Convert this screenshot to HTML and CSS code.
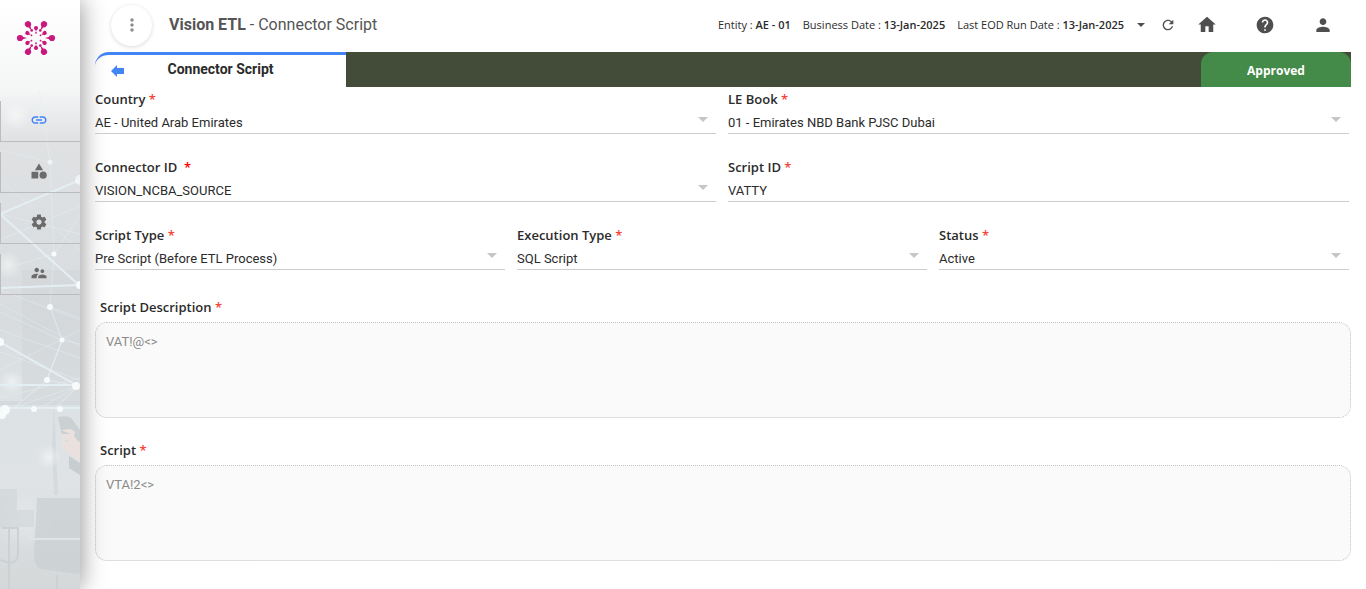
FILE: index.html
```html
<!DOCTYPE html>
<html lang="en">
<head>
<meta charset="utf-8">
<title>Vision ETL - Connector Script</title>
<link rel="stylesheet" href="styles.css">
</head>
<body>
<div class="app">
  <aside class="sidebar">
    <svg class="backdrop" viewBox="0 0 80 589" preserveAspectRatio="xMidYMid slice" aria-hidden="true">
      <defs>
        <linearGradient id="wall" x1="0" y1="0" x2="0" y2="1">
          <stop offset="0" stop-color="#fff"/><stop offset=".15" stop-color="#f5f6f6"/>
          <stop offset=".24" stop-color="#dfe1e3"/><stop offset=".55" stop-color="#d8dcde"/>
          <stop offset=".65" stop-color="#dce1e4"/><stop offset=".82" stop-color="#dfe3e5"/><stop offset="1" stop-color="#d5d8d9"/>
        </linearGradient>
        <radialGradient id="glow"><stop offset="0" stop-color="#fff" stop-opacity=".5"/><stop offset="1" stop-color="#fff" stop-opacity="0"/></radialGradient>
      </defs>
      <rect width="80" height="589" fill="url(#wall)"/>
      <path d="M22 270h58v131H22z" fill="#cdd2d5" opacity=".35"/>
      <path d="M0 401h80v4H0z" fill="#cbd2d5" opacity=".5"/>
      <path d="M54 405l4 90h-4l-2-50z" fill="#c7ced1" opacity=".4"/>
      <circle cx="8" cy="265" r="14" fill="url(#glow)"/><circle cx="12" cy="382" r="12" fill="url(#glow)"/>
      <circle cx="49" cy="457" r="12" fill="url(#glow)"/><circle cx="16" cy="116" r="14" fill="url(#glow)"/>
      <circle cx="25" cy="520" r="30" fill="url(#glow)" opacity=".5"/>
      <g fill="none" stroke="#e4eff4">
        <path stroke-width="2" d="M0 214L80 180M0 214L80 286M0 288l80-3M0 342l78 44M0 385h78M0 408h80"/>
        <path stroke-opacity=".8" d="M50 307l12 33-15 40-33 28M62 340l-15 40 31 6-24 23"/>
        <path stroke-opacity=".5" d="M39 90l11 72 4 92-4 53M40 106L0 137M50 162L0 150M54 254L80 215M54 254L0 270M0 214l80 20M50 307L80 318M0 290l80 30M0 304l80 42M62 340L0 312M62 340l18 4M0 330l80 28M0 370l80-40M78 386L40 408M0 398l80-20M0 352l80 28M0 412l78-26M0 240l80-34M0 180l80 70"/>
      </g>
      <g fill="#f8fbfc">
        <circle cx="50" cy="162" r="2.5" opacity=".7"/><circle cx="80" cy="180" r="5" opacity=".7"/><circle cx="54" cy="254" r="2.5"/><circle cx="80" cy="285" r="4"/>
        <circle cx="50" cy="307" r="3"/><circle cx="62" cy="340" r="2.5"/><circle cx="0" cy="342" r="4"/><circle cx="47" cy="380" r="3"/>
        <circle cx="76" cy="386" r="4"/><circle cx="5" cy="410" r="5"/><circle cx="2" cy="415" r="4"/><circle cx="34" cy="409" r="3"/><circle cx="60" cy="409" r="3"/>
      </g>
      <path d="M58 417q10-2 13 1l9 12v20l-8-2-10-12z" fill="#cbd0d2"/>
      <path d="M61 430l10-1 4 3-1 4 4 5 2 1v18l-10-5-9-8 1-5 7-1-8-2 0-5 9 0z" fill="#eae1de"/>
      <path d="M69 456l11 7v12l-11-7z" fill="#c8cdd0"/>
      <path d="M0 489h17v21H0zM0 510h34v17H0z" fill="#cbd1d4" opacity=".5"/>
      <path d="M37 498h43v76l-40-5q-6-3-6-14z" fill="#c9ced1" opacity=".7"/>
      <path d="M2 528h16v26q0 8-8 9l-10-3M9 528v61M57 575v14" stroke="#ccd1d4" stroke-width="2" fill="none"/>
      <path d="M27 533l5 6h48" stroke="#e0e4e6" stroke-width="2" fill="none"/>
    </svg>
    <a class="logo" href="#" aria-label="Home page">
      <svg width="40" height="40" viewBox="-20 -20 40 40">
        <defs>
          <g id="ray"><circle cx="16" r="3.1"/><path d="M9 0l7-2v4z"/></g>
          <g id="bead"><circle cx="10" r="2.1"/><path d="M6 0l4-1.3v2.6z"/><circle cx="5.2" r=".9"/></g>
        </defs>
        <g fill="#c9187e">
          <use href="#ray"/><use href="#ray" transform="rotate(60)"/><use href="#ray" transform="rotate(120)"/><use href="#ray" transform="rotate(180)"/><use href="#ray" transform="rotate(240)"/><use href="#ray" transform="rotate(300)"/>
          <use href="#bead" transform="rotate(30)"/><use href="#bead" transform="rotate(90)"/><use href="#bead" transform="rotate(150)"/><use href="#bead" transform="rotate(210)"/><use href="#bead" transform="rotate(270)"/><use href="#bead" transform="rotate(330)"/>
          <circle cx="4.3" cy="7.6" r="1.3"/><circle cx="-4.3" cy="7.6" r="1.3"/><circle cx="4.3" cy="-7.6" r="1.3"/><circle cx="-4.3" cy="-7.6" r="1.3"/>
        </g>
      </svg>
    </a>
    <nav class="menu">
      <a class="menu-item active" href="#" aria-label="Connectors"><svg class="menu-icon" viewBox="0 0 24 24"><path d="M3.9 12c0-1.71 1.39-3.1 3.1-3.1h4V7H7c-2.76 0-5 2.24-5 5s2.24 5 5 5h4v-1.9H7c-1.71 0-3.1-1.39-3.1-3.1zM8 13h8v-2H8v2zm9-6h-4v1.9h4c1.71 0 3.1 1.39 3.1 3.1s-1.39 3.1-3.1 3.1h-4V17h4c2.76 0 5-2.24 5-5s-2.24-5-5-5z"/></svg></a>
      <a class="menu-item" href="#" aria-label="Categories"><svg class="menu-icon" viewBox="0 0 24 24"><path d="M12 2l-5.5 9h11zM2 13h9v9H2z"/><circle cx="17.500" cy="17.500" r="4.800"/></svg></a>
      <a class="menu-item" href="#" aria-label="Settings"><svg class="menu-icon" viewBox="0 0 24 24"><path d="M19.430 12.980c.04-.32.07-.64.07-.98s-.03-.66-.07-.98l2.110-1.650c.19-.15.24-.42.12-.64l-2-3.460c-.12-.22-.39-.3-.61-.22l-2.490 1c-.52-.4-1.080-.73-1.690-.98l-.38-2.650C14.460 2.180 14.250 2 14 2h-4c-.25 0-.46.18-.49.42l-.38 2.650c-.61.25-1.170.59-1.690.98l-2.490-1c-.23-.09-.49 0-.61.22l-2 3.460c-.13.22-.07.49.12.64l2.110 1.650c-.04.32-.07.65-.07.98s.03.66.07.98l-2.110 1.650c-.19.15-.24.42-.12.64l2 3.460c.12.22.39.3.61.22l2.490-1c.52.4 1.080.73 1.690.98l.38 2.650c.03.24.24.42.49.42h4c.25 0 .46-.18.49-.42l.38-2.650c.61-.25 1.170-.59 1.690-.98l2.490 1c.23.09.49 0 .61-.22l2-3.460c.12-.22.07-.49-.12-.64l-2.110-1.650zM12 15.500c-1.930 0-3.500-1.570-3.500-3.500s1.570-3.500 3.500-3.500 3.500 1.570 3.500 3.500-1.570 3.500-3.500 3.500z"/></svg></a>
      <a class="menu-item" href="#" aria-label="Users"><svg class="menu-icon" viewBox="0 0 24 24"><path d="M16.500 12c1.380 0 2.490-1.120 2.490-2.500S17.880 7 16.500 7 14 8.120 14 9.500s1.120 2.500 2.500 2.500zM9 11c1.660 0 2.990-1.340 2.990-3S10.660 5 9 5 6 6.340 6 8s1.340 3 3 3zm7.500 3c-1.830 0-5.500.92-5.500 2.750V19h11v-2.250c0-1.830-3.670-2.750-5.500-2.750zM9 13c-2.330 0-7 1.170-7 3.500V19h7v-2.250c0-.85.33-2.340 2.370-3.470C10.500 13.100 9.660 13 9 13z"/></svg></a>
    </nav>
  </aside>
  <main class="main">
    <header class="header">
      <button class="more" type="button" aria-label="More"><svg width="20" height="20" viewBox="0 0 24 24"><path d="M12 8c1.100 0 2-.9 2-2s-.9-2-2-2-2 .9-2 2 .9 2 2 2zm0 2c-1.100 0-2 .9-2 2s.9 2 2 2 2-.9 2-2-.9-2-2-2zm0 6c-1.100 0-2 .9-2 2s.9 2 2 2 2-.9 2-2-.9-2-2-2z"/></svg></button>
      <h1 class="title"><b>Vision ETL</b> - Connector Script</h1>
      <div class="meta">
        <span>Entity : <b>AE - 01</b></span>
        <span>Business Date : <b>13-Jan-2025</b></span>
        <span>Last EOD Run Date : <b>13-Jan-2025</b></span>
      </div>
      <div class="actions">
        <button class="action narrow" type="button" aria-label="Expand"><svg width="8" height="4" viewBox="0 0 8 4"><path d="M0 0h8L4 4z"/></svg></button>
        <button class="action small" type="button" aria-label="Refresh"><svg width="16" height="16" viewBox="0 0 24 24"><path d="M17.650 6.350C16.200 4.900 14.210 4 12 4c-4.420 0-7.990 3.580-7.990 8s3.570 8 7.990 8c3.730 0 6.840-2.550 7.730-6h-2.080c-.82 2.330-3.040 4-5.650 4-3.310 0-6-2.690-6-6s2.690-6 6-6c1.660 0 3.140.69 4.220 1.780L13 11h7V4l-2.350 2.350z"/></svg></button>
        <button class="action home" type="button" aria-label="Home"><svg width="20" height="20" viewBox="0 0 24 24"><path d="M10 20.500v-7h4v7h5.500v-9H22.500L12 2 1.500 11.500h3v9z"/></svg></button>
        <button class="action" type="button" aria-label="Help"><svg width="20" height="20" viewBox="0 0 24 24"><path d="M12 2C6.480 2 2 6.480 2 12s4.480 10 10 10 10-4.480 10-10S17.520 2 12 2zm1 17h-2v-2h2v2zm2.070-7.750l-.9.92C13.450 12.900 13 13.500 13 15h-2v-.5c0-1.100.45-2.100 1.170-2.830l1.240-1.260c.37-.36.59-.86.59-1.410 0-1.100-.9-2-2-2s-2 .9-2 2H8c0-2.210 1.790-4 4-4s4 1.790 4 4c0 .88-.36 1.680-.93 2.250z"/></svg></button>
        <button class="action" type="button" aria-label="Account"><svg width="20" height="20" viewBox="0 0 24 24"><path d="M12 12c2.210 0 4-1.790 4-4s-1.790-4-4-4-4 1.790-4 4 1.790 4 4 4zm0 2c-2.670 0-8 1.340-8 4v2.500h16V18c0-2.660-5.330-4-8-4z"/></svg></button>
      </div>
    </header>
    <div class="tabbar">
      <div class="tab">
        <button class="back" type="button" aria-label="Back"><svg width="13" height="12" viewBox="0 0 13 12"><path d="M0 6l6-6v3h7v6H6v3z"/></svg></button>
        <h2 class="tab-title">Connector Script</h2>
      </div>
      <div class="status">Approved</div>
    </div>
    <form class="form">
      <div class="field half"><label for="country">Country <i>*</i></label><div class="pick"><select id="country"><option>AE - United Arab Emirates</option></select></div></div>
      <div class="field half"><label for="book">LE Book <i>*</i></label><div class="pick"><select id="book"><option>01 - Emirates NBD Bank PJSC Dubai</option></select></div></div>
      <div class="field half"><label for="connector">Connector ID &nbsp;<i class="strong">*</i></label><div class="pick"><select id="connector"><option>VISION_NCBA_SOURCE</option></select></div></div>
      <div class="field half"><label for="scriptid">Script ID <i>*</i></label><input id="scriptid" type="text" value="VATTY"></div>
      <div class="field third"><label for="type">Script Type <i>*</i></label><div class="pick"><select id="type"><option>Pre Script (Before ETL Process)</option></select></div></div>
      <div class="field third"><label for="exec">Execution Type <i>*</i></label><div class="pick"><select id="exec"><option>SQL Script</option></select></div></div>
      <div class="field third"><label for="state">Status <i>*</i></label><div class="pick"><select id="state"><option>Active</option></select></div></div>
    </form>
    <div class="notes">
      <div class="note"><label for="desc">Script Description <i>*</i></label><textarea id="desc" readonly>VAT!@&lt;&gt;</textarea></div>
      <div class="note"><label for="script">Script <i>*</i></label><textarea id="script" readonly>VTA!2&lt;&gt;</textarea></div>
    </div>
  </main>
</div>
</body>
</html>
```
FILE: styles.css
```css
* { box-sizing: border-box; }
body { margin: 0; font-family: Roboto, "Liberation Sans", sans-serif; color: #2b2b2b; background: #fff; }
button { border: 0; padding: 0; background: none; display: flex; align-items: center; justify-content: center; }
h1, h2 { margin: 0; }
svg { display: block; }

.app { display: flex; min-height: 100vh; }
.sidebar { position: relative; flex: 0 0 80px; box-shadow: 0 0 24px rgba(0, 0, 0, .45); }
.backdrop { position: absolute; inset: 0; width: 100%; height: 100%; }
.logo { position: relative; display: flex; height: 101px; padding: 18px 16px; }
.menu { position: relative; display: flex; flex-direction: column; gap: 10px; }
.menu-item { display: flex; align-items: center; justify-content: center; height: 41px; padding: 0 4px 2px 0; border: solid #bcbcbc; border-width: 0 0 1px 1px; }
.menu-icon { width: 18px; height: 18px; fill: #6b6b6b; }
.active .menu-icon { fill: #4285f4; }

.main { flex: 1; min-width: 0; padding: 0 15px; }
.header { display: flex; align-items: center; height: 52px; padding: 0 0 2px 16px; }
.more { width: 41px; height: 41px; margin-right: 17px; border-radius: 50%; background: #fff; box-shadow: 0 1px 4px rgba(0, 0, 0, .15); fill: #8c8c8c; }
.title { font-size: 16px; font-weight: 400; line-height: 24px; color: #555; }
.title b { font-weight: 700; }
.meta { display: flex; gap: 12px; margin-left: auto; font-family: "Open Sans", sans-serif; font-size: 11px; line-height: 16px; white-space: nowrap; }
.meta b { font-weight: 600; }
.actions { display: flex; align-items: center; margin-right: -1px; }
.action { width: 58px; height: 28px; fill: #4f4f4f; }
.actions .narrow { width: 34px; }
.actions .small { width: 20px; }

.tabbar { display: flex; height: 35px; justify-content: space-between; background: linear-gradient(90deg, transparent 251px, #434b39 251px); }
.tab { display: flex; align-items: center; width: 251px; border-top: 3px solid #4285f4; border-radius: 14px 0 0 0; }
.back { width: 13px; margin-left: 16px; fill: #4285f4; }
.tab-title { flex: 1; padding: 0 29px 4px 0; text-align: center; font-size: 14px; font-weight: 700; line-height: 20px; }
.status { width: 150px; border-radius: 12px 12px 0 0; background: #448a48; color: #fff; font: 700 12px/37px "Open Sans", sans-serif; text-align: center; }

label { display: block; font: 600 13px/18px "Open Sans", sans-serif; }
label i { font-style: normal; color: #f44336; }
label .strong { color: #f00; }
.form { display: grid; grid-template-columns: repeat(6, 1fr); grid-auto-rows: minmax(68px, auto); column-gap: 12px; padding: 3px 2px 0 0; }
.half { grid-column: span 3; }
.third { grid-column: span 2; }
.pick { position: relative; }
.pick::after { content: ""; position: absolute; right: 8px; top: 9px; border: 5px solid transparent; border-top-color: #c6c6c6; border-bottom: 0; pointer-events: none; }
select, input { appearance: none; display: block; width: 100%; height: 26px; margin: 0; padding: 4px 0 0; border: 0; border-bottom: 1px solid #ccc; border-radius: 0; background: transparent; color: #2b2b2b; font: 400 13px/20px Roboto, sans-serif; }
select { padding-top: 5px; }
.notes { display: grid; gap: 23px; padding: 4px 0 24px; }
.note { display: grid; gap: 6px; }
.note label { padding-left: 5px; }
textarea { display: block; width: 100%; height: 96px; margin: 0; padding: 10px; resize: none; border: 1px dotted #c4c4c4; border-radius: 12px; background: rgba(245, 245, 245, .5); color: #8a8a8a; font: 400 13px/18px Roboto, sans-serif; }
```
